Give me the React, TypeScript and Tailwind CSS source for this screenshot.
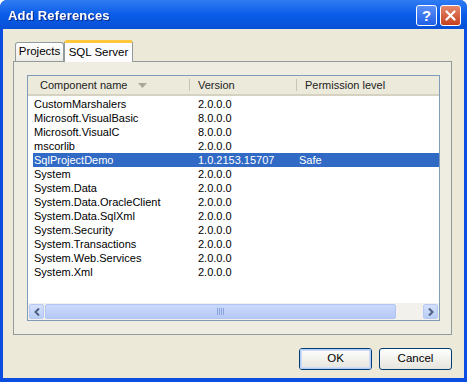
const rows: [string, string, string][] = [
  ["CustomMarshalers", "2.0.0.0", ""],
  ["Microsoft.VisualBasic", "8.0.0.0", ""],
  ["Microsoft.VisualC", "8.0.0.0", ""],
  ["mscorlib", "2.0.0.0", ""],
  ["SqlProjectDemo", "1.0.2153.15707", "Safe"],
  ["System", "2.0.0.0", ""],
  ["System.Data", "2.0.0.0", ""],
  ["System.Data.OracleClient", "2.0.0.0", ""],
  ["System.Data.SqlXml", "2.0.0.0", ""],
  ["System.Security", "2.0.0.0", ""],
  ["System.Transactions", "2.0.0.0", ""],
  ["System.Web.Services", "2.0.0.0", ""],
  ["System.Xml", "2.0.0.0", ""],
];

const TitleButtons = () => (
  <div className="flex gap-[3px] mt-[1px]">
    <div className="w-[21px] h-[21px] rounded-[3px] border border-white bg-gradient-to-b from-[#5c8ff7] to-[#1f5fe5] flex items-center justify-center text-white font-bold text-[15px] leading-none">
      ?
    </div>
    <div className="w-[21px] h-[21px] rounded-[3px] border border-white bg-gradient-to-b from-[#e6876b] to-[#c4401d] flex items-center justify-center">
      <svg width="11" height="11" viewBox="0 0 11 11">
        <path d="M1.5 1.5 L9.5 9.5 M9.5 1.5 L1.5 9.5" stroke="white" strokeWidth="2.2" strokeLinecap="round" />
      </svg>
    </div>
  </div>
);

const ListView = () => (
  <div className="flex-1 border border-[#7f9db9] bg-white flex flex-col">
    <div className="h-[20px] flex bg-[#ebeadb] border-b-2 border-[#d6d2c2] text-[11px] text-[#222]">
      <div className="w-[162px] flex items-center pl-[12px] border-r border-[#c7c5b2] my-[3px]">
        Component name
        <svg width="9" height="5" viewBox="0 0 9 5" className="ml-[11px]">
          <path d="M0 0 H9 L4.5 5 Z" fill="#aca899" />
        </svg>
      </div>
      <div className="w-[107px] flex items-center pl-[8px] border-r border-[#c7c5b2] my-[3px]">Version</div>
      <div className="flex-1 flex items-center pl-[8px]">Permission level</div>
    </div>
    <div className="flex-1 pt-[1px]">
      {rows.map(([name, ver, perm]) => {
        const sel = name === "SqlProjectDemo";
        return (
          <div
            key={name}
            className={`h-[14px] flex items-center text-[11px] leading-none ml-[5px] ${sel ? "bg-[#316ac5] text-white" : "text-black"}`}
          >
            <div className="w-[157px] pl-[1px]">{name}</div>
            <div className="w-[105px] pl-[8px]">{ver}</div>
            <div className="flex-1 pl-[4px]">{perm}</div>
          </div>
        );
      })}
    </div>
    <div className="h-[17px] flex bg-[#f3f1ec] p-[1px] gap-[1px]">
      <div className="w-[15px] rounded-[2px] bg-gradient-to-b from-[#d5e1fb] to-[#b8cdf7] border border-[#b7c9f2] flex items-center justify-center">
        <svg width="6" height="8" viewBox="0 0 6 8">
          <path d="M5 0.5 L1.5 4 L5 7.5" stroke="#4d6185" strokeWidth="2" fill="none" />
        </svg>
      </div>
      <div className="w-[351px] rounded-[2px] bg-gradient-to-b from-[#cad8fb] to-[#b6c9f6] border border-[#b1c5f2] flex items-center justify-center">
        <div className="flex gap-[1px]">
          {[0, 1, 2, 3].map((i) => (
            <div key={i} className="w-[1px] h-[7px] bg-[#8ca5e0]" />
          ))}
        </div>
      </div>
      <div className="flex-1" />
      <div className="w-[15px] rounded-[2px] bg-gradient-to-b from-[#d5e1fb] to-[#b8cdf7] border border-[#b7c9f2] flex items-center justify-center">
        <svg width="6" height="8" viewBox="0 0 6 8">
          <path d="M1 0.5 L4.5 4 L1 7.5" stroke="#4d6185" strokeWidth="2" fill="none" />
        </svg>
      </div>
    </div>
  </div>
);

const XpButton = ({ label, focused }: { label: string; focused?: boolean }) => (
  <div className="w-[73px] h-[22px] rounded-[3px] border border-[#003c74] bg-gradient-to-b from-white to-[#e5e4dc] flex items-center justify-center text-[11.5px] text-black">
    <div className={`w-full h-full rounded-[2px] flex items-center justify-center ${focused ? "shadow-[inset_0_0_0_1px_#b5cdf5,inset_0_0_0_2px_#cedcf7]" : ""}`}>
      {label}
    </div>
  </div>
);

export default function App() {
  return (
    <div
      className="w-[467px] h-[382px] flex flex-col bg-[#0a4de0] rounded-t-[7px] overflow-hidden"
      style={{ fontFamily: "Tahoma, 'Liberation Sans', Arial, sans-serif" }}
    >
      <div className="h-[29px] flex items-center justify-between pl-[8px] pr-[6px] bg-gradient-to-b from-[#2f7cf2] via-[#0a5ce8] to-[#0850d6]">
        <span className="text-white font-bold text-[13px] tracking-[0.2px] mt-[3px] drop-shadow-[1px_1px_0_#0a2a8a]">Add References</span>
        <TitleButtons />
      </div>
      <div className="flex-1 mx-[3px] mb-[4px] bg-[#ece9d8] flex flex-col pl-[10px] pr-[12px] pt-[11px]">
        <div className="h-[21px] flex items-end pl-[2px] relative z-10">
          <div className="h-[19px] w-[49px] border border-b-0 border-[#919b9c] rounded-t-[3px] bg-gradient-to-b from-white to-[#ecebe5] flex items-center justify-center text-[11.5px] text-black mb-0">
            Projects
          </div>
          <div className="h-[22px] w-[69px] -mb-[1px] border-x border-[#919b9c] border-t-[3px] border-t-[#ffc83c] rounded-t-[3px] bg-[#fcfcfe] flex items-center justify-center text-[11.5px] text-black">
            SQL Server
          </div>
        </div>
        <div className="h-[274px] border border-[#919b9c] bg-[#efede2] flex flex-col pl-[13px] pr-[11px] pt-[13px] pb-[13px]">
          <ListView />
        </div>
        <div className="flex justify-end gap-[7px] mt-[13px]">
          <XpButton label="OK" focused />
          <XpButton label="Cancel" />
        </div>
      </div>
    </div>
  );
}
